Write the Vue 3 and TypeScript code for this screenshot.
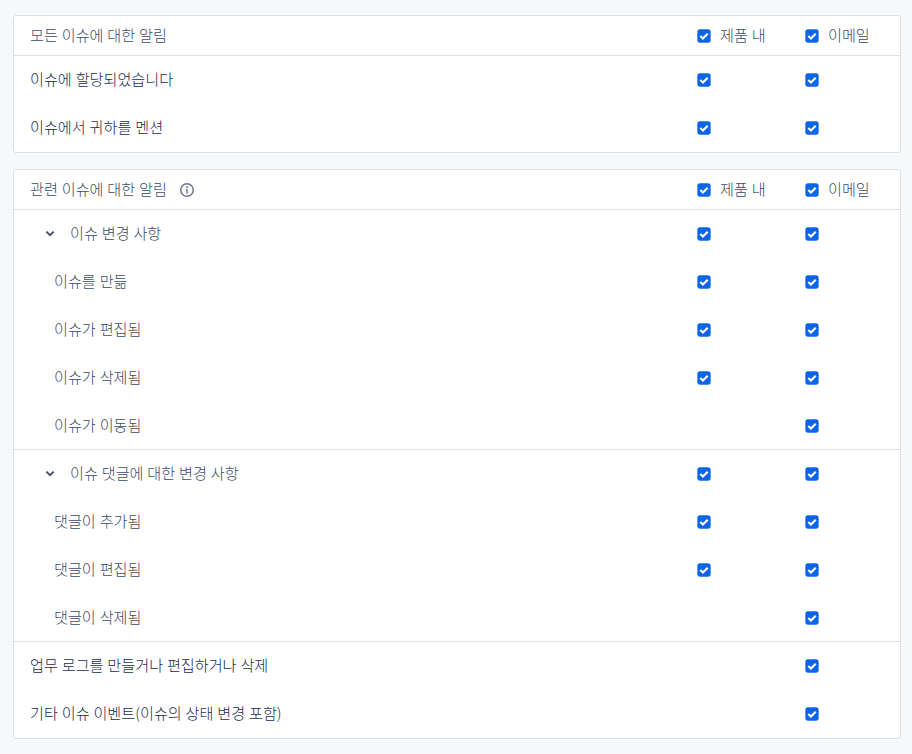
<script setup lang="ts">
interface Row {
  label: string
  kind: 'plain' | 'group' | 'child'
  inProduct: boolean
  divider?: boolean
}

const firstRows: Row[] = [
  { label: '이슈에 할당되었습니다', kind: 'plain', inProduct: true },
  { label: '이슈에서 귀하를 멘션', kind: 'plain', inProduct: true },
]

const secondRows: Row[] = [
  { label: '이슈 변경 사항', kind: 'group', inProduct: true },
  { label: '이슈를 만듦', kind: 'child', inProduct: true },
  { label: '이슈가 편집됨', kind: 'child', inProduct: true },
  { label: '이슈가 삭제됨', kind: 'child', inProduct: true },
  { label: '이슈가 이동됨', kind: 'child', inProduct: false, divider: true },
  { label: '이슈 댓글에 대한 변경 사항', kind: 'group', inProduct: true },
  { label: '댓글이 추가됨', kind: 'child', inProduct: true },
  { label: '댓글이 편집됨', kind: 'child', inProduct: true },
  { label: '댓글이 삭제됨', kind: 'child', inProduct: false, divider: true },
  { label: '업무 로그를 만들거나 편집하거나 삭제', kind: 'plain', inProduct: false },
  { label: '기타 이슈 이벤트(이슈의 상태 변경 포함)', kind: 'plain', inProduct: false },
]

const cards = [
  { title: '모든 이슈에 대한 알림', info: false, rows: firstRows },
  { title: '관련 이슈에 대한 알림', info: true, rows: secondRows },
]
</script>

<template>
  <main class="page">
    <section v-for="card in cards" :key="card.title" class="card">
      <header class="head">
        <div class="name">
          <span class="txt">{{ card.title }}</span>
          <svg v-if="card.info" class="info" width="16" height="16" viewBox="0 0 16 16" fill="none">
            <circle cx="8" cy="8" r="6.25" stroke="#6B778C" stroke-width="1.5" />
            <rect x="7.25" y="7" width="1.5" height="4.5" fill="#6B778C" />
            <circle cx="8" cy="5" r="1" fill="#6B778C" />
          </svg>
        </div>
        <div class="col">
          <svg class="box" width="16" height="16" viewBox="0 0 16 16">
            <rect x="1.33" y="1.33" width="13.33" height="13.33" rx="2.6" fill="#0C66E4" />
            <path d="M4.3 8.1 6.9 10.5 11.7 5.7" fill="none" stroke="#fff" stroke-width="2.1" />
          </svg>
          <span class="txt">제품 내</span>
        </div>
        <div class="col">
          <svg class="box" width="16" height="16" viewBox="0 0 16 16">
            <rect x="1.33" y="1.33" width="13.33" height="13.33" rx="2.6" fill="#0C66E4" />
            <path d="M4.3 8.1 6.9 10.5 11.7 5.7" fill="none" stroke="#fff" stroke-width="2.1" />
          </svg>
          <span class="txt">이메일</span>
        </div>
      </header>
      <div
        v-for="row in card.rows"
        :key="row.label"
        class="row"
        :class="[row.kind, { divider: row.divider }]"
      >
        <div class="name">
          <svg v-if="row.kind === 'group'" class="chev" width="10" height="8" viewBox="0 0 10 8" fill="none">
            <path d="M1.4 1.6 5 5.2 8.6 1.6" stroke="#44546F" stroke-width="2" />
          </svg>
          <span class="txt">{{ row.label }}</span>
        </div>
        <div class="col">
          <svg v-if="row.inProduct" class="box" width="16" height="16" viewBox="0 0 16 16">
            <rect x="1.33" y="1.33" width="13.33" height="13.33" rx="2.6" fill="#0C66E4" />
            <path d="M4.3 8.1 6.9 10.5 11.7 5.7" fill="none" stroke="#fff" stroke-width="2.1" />
          </svg>
        </div>
        <div class="col">
          <svg class="box" width="16" height="16" viewBox="0 0 16 16">
            <rect x="1.33" y="1.33" width="13.33" height="13.33" rx="2.6" fill="#0C66E4" />
            <path d="M4.3 8.1 6.9 10.5 11.7 5.7" fill="none" stroke="#fff" stroke-width="2.1" />
          </svg>
        </div>
      </div>
    </section>
  </main>
</template>

<style>
html,
body {
  margin: 0;
  background: #f7f8f9;
}
</style>

<style scoped>
.page {
  box-sizing: border-box;
  width: 912px;
  height: 754px;
  padding: 15px 11px 0 13px;
  display: flex;
  flex-direction: column;
  gap: 16px;
  overflow: hidden;
  background: #f7f8f9;
  font-family: "Noto Sans CJK KR", "Noto Sans", sans-serif;
  font-size: 15.15px;
  font-weight: 300;
  word-spacing: 0.5px;
  line-height: 20px;
}

.card {
  background: #fff;
  border: 1px solid #dcdfe4;
  border-radius: 3px;
}

.head,
.row {
  display: grid;
  grid-template-columns: 1fr 108px 94px;
  align-items: center;
  padding-left: 16px;
}

.head {
  box-sizing: border-box;
  height: 40px;
  border-bottom: 1px solid #dcdfe4;
  color: #3b4b66;
}

.row {
  box-sizing: border-box;
  height: 48px;
  color: #172b4d;
}

.row.child {
  padding-left: 40px;
  color: #3b4b66;
}

.row.group {
  color: #3b4b66;
}

.row.divider {
  border-bottom: 1px solid #dcdfe4;
}

.name {
  display: flex;
  align-items: center;
  min-width: 0;
}

.txt {
  margin-bottom: 4px;
}

.info {
  margin-left: 12px;
}

.chev {
  margin: 0 15px 0 15px;
}

.col {
  display: flex;
  align-items: center;
  gap: 8px;
}

.box {
  flex: none;
  margin-left: -2px;
}
</style>
